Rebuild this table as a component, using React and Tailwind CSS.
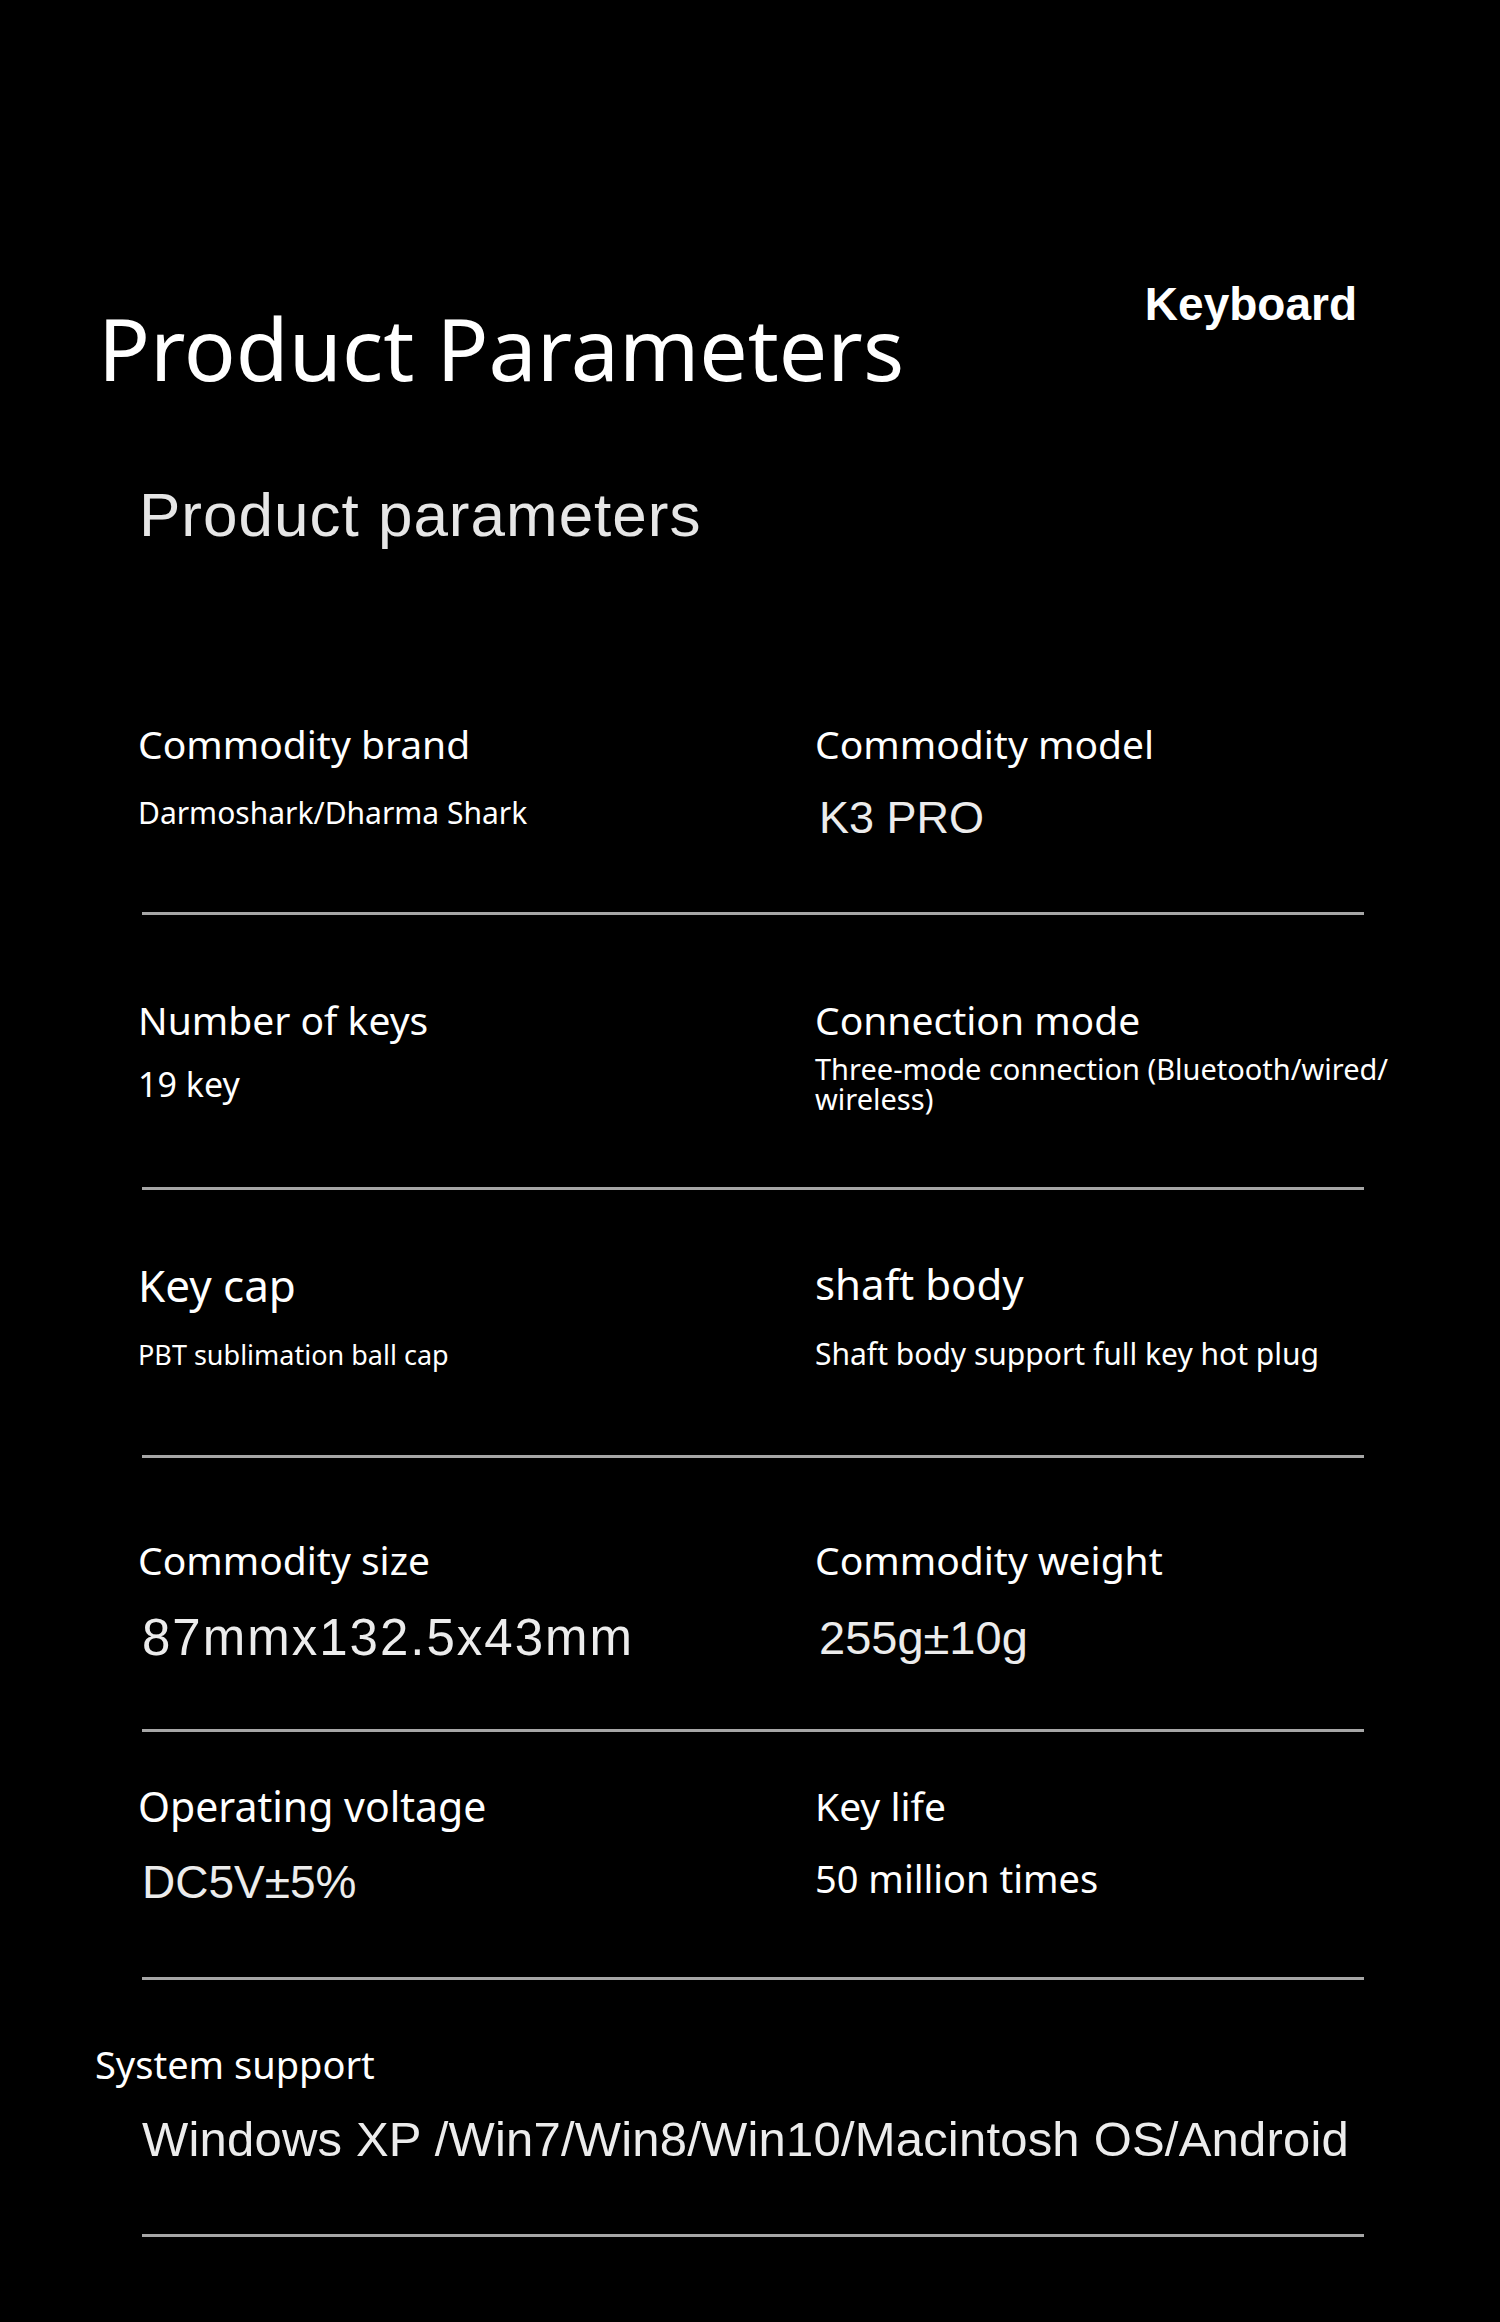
const label = "font-['Noto_Sans',sans-serif] text-white leading-none";
const arial = "font-['Liberation_Sans',Arial,sans-serif] text-[#ececec] leading-none";

function Line() {
  return <div className="ml-[142px] w-[1222px] h-[3px] bg-[#a6a6a6]" />;
}

export default function App() {
  return (
    <div className="w-[1500px] h-[2322px] bg-black overflow-hidden">
      {/* header */}
      <div className="flex items-start justify-between pt-[281px] pl-[98px] pr-[143px]">
        <h1 className="mt-[24px] font-['Noto_Sans',sans-serif] text-[86px] leading-none text-white">
          Product Parameters
        </h1>
        <div className="font-['Liberation_Sans',Arial,sans-serif] font-bold text-[46px] leading-none text-white">
          Keyboard
        </div>
      </div>
      <h2 className="mt-[93px] pl-[139px] font-['Liberation_Sans',Arial,sans-serif] text-[62px] tracking-[1px] leading-none text-[#e6e6e6]">
        Product parameters
      </h2>

      {/* row 1 */}
      <div className="mt-[178px] h-[188px] grid grid-cols-[677px_1fr] pl-[138px]">
        <div className="flex flex-col">
          <span className={`${label} text-[39px]`}>Commodity brand</span>
          <span className={`${label} text-[30px] mt-[35px]`}>Darmoshark/Dharma Shark</span>
        </div>
        <div className="flex flex-col">
          <span className={`${label} text-[39px]`}>Commodity model</span>
          <span className={`${arial} text-[45px] mt-[32px] ml-[4px]`}>K3 PRO</span>
        </div>
      </div>
      <Line />

      {/* row 2 */}
      <div className="mt-[85px] h-[187px] grid grid-cols-[677px_1fr] pl-[138px]">
        <div className="flex flex-col">
          <span className={`${label} text-[39px]`}>Number of keys</span>
          <span className={`${label} text-[34px] mt-[28px]`}>19 key</span>
        </div>
        <div className="flex flex-col mt-[0px]">
          <span className={`${label} text-[39px]`}>Connection mode</span>
          <span className="font-['Noto_Sans',sans-serif] text-white text-[29px] leading-[30px] mt-[15px]">
            Three-mode connection (Bluetooth/wired/
            <br />
            wireless)
          </span>
        </div>
      </div>
      <Line />

      {/* row 3 */}
      <div className="mt-[73px] h-[192px] grid grid-cols-[677px_1fr] pl-[138px]">
        <div className="flex flex-col">
          <span className={`${label} text-[44px]`}>Key cap</span>
          <span className={`${label} text-[27px] mt-[34px]`}>PBT sublimation ball cap</span>
        </div>
        <div className="flex flex-col">
          <span className={`${label} text-[42px]`}>shaft body</span>
          <span className={`${label} text-[30px] mt-[34px]`}>Shaft body support full key hot plug</span>
        </div>
      </div>
      <Line />

      {/* row 4 */}
      <div className="mt-[82px] h-[189px] grid grid-cols-[677px_1fr] pl-[138px]">
        <div className="flex flex-col">
          <span className={`${label} text-[39px]`}>Commodity size</span>
          <span className={`${arial} text-[51px] mt-[33px] ml-[4px] tracking-[2px]`}>87mmx132.5x43mm</span>
        </div>
        <div className="flex flex-col">
          <span className={`${label} text-[39px]`}>Commodity weight</span>
          <span className={`${arial} text-[47px] mt-[35px] ml-[4px]`}>255g±10g</span>
        </div>
      </div>
      <Line />

      {/* row 5 */}
      <div className="mt-[54px] h-[191px] grid grid-cols-[677px_1fr] pl-[138px]">
        <div className="flex flex-col">
          <span className={`${label} text-[41px]`}>Operating voltage</span>
          <span className={`${arial} text-[46px] mt-[32px] ml-[4px]`}>DC5V±5%</span>
        </div>
        <div className="flex flex-col">
          <span className={`${label} text-[39px]`}>Key life</span>
          <span className={`${label} text-[38px] mt-[34px]`}>50 million times</span>
        </div>
      </div>
      <Line />

      {/* system support */}
      <div className="mt-[65px] h-[189px] flex flex-col">
        <span className={`${label} text-[38px] pl-[95px]`}>System support</span>
        <span className={`${arial} text-[49px] tracking-[0.2px] mt-[32px] pl-[142px]`}>
          Windows XP /Win7/Win8/Win10/Macintosh OS/Android
        </span>
      </div>
      <Line />
    </div>
  );
}
